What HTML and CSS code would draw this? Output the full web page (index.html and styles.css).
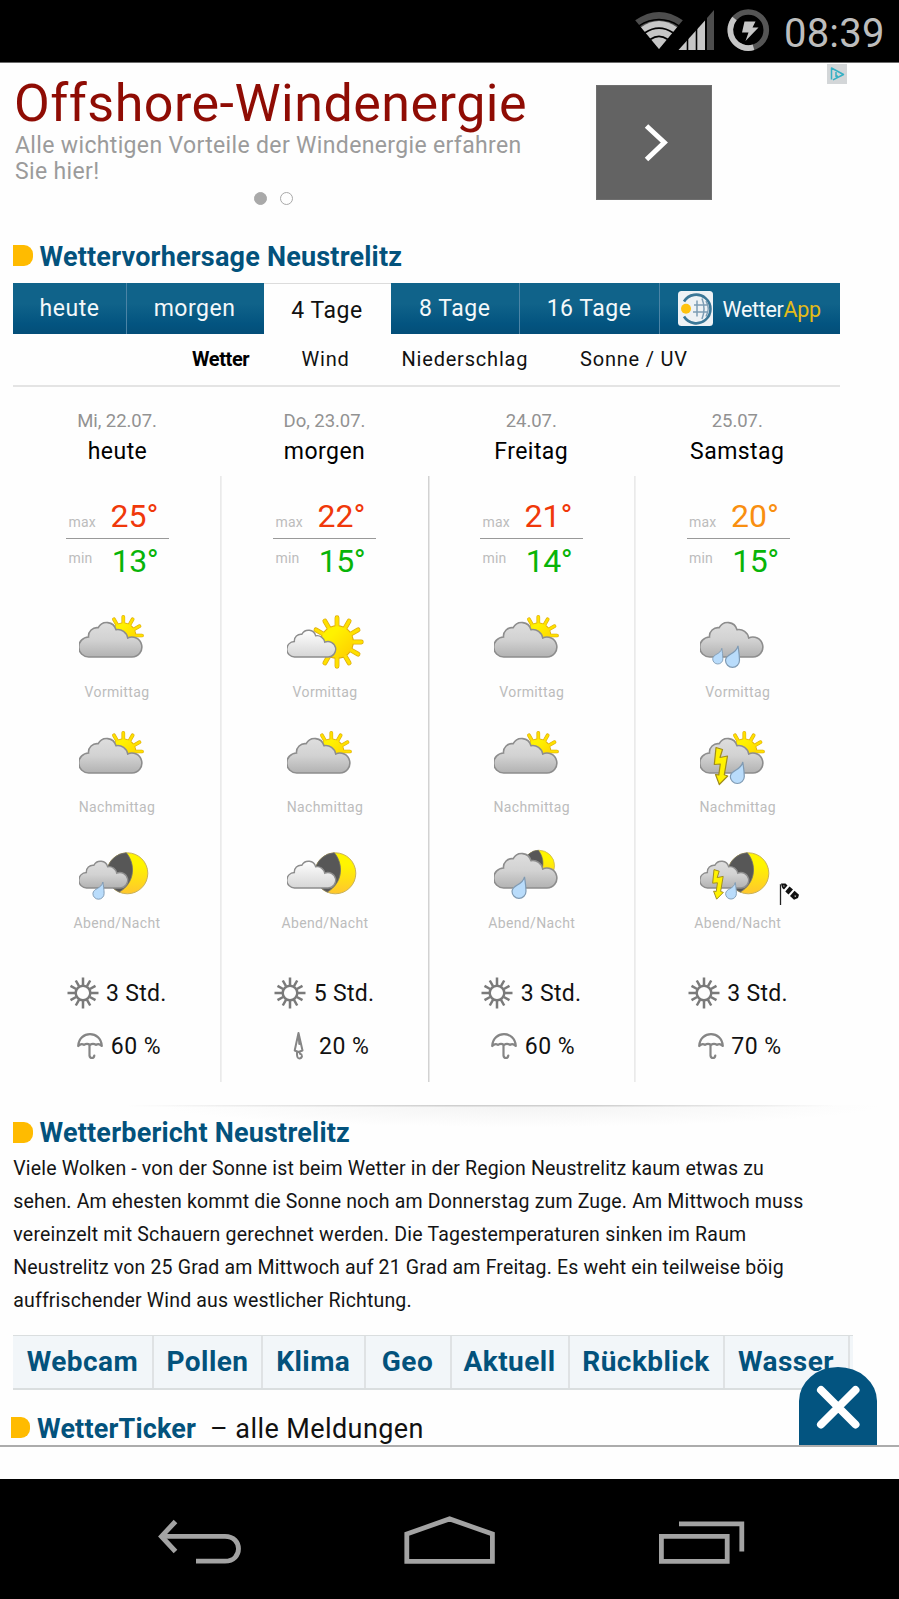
FILE: index.html
```html
<!DOCTYPE html>
<html lang="de">
<head>
<meta charset="utf-8">
<title>Wettervorhersage Neustrelitz</title>
<link rel="stylesheet" href="styles.css">
</head>
<body>
<svg class="defs" width="0" height="0" aria-hidden="true">
  <defs>
    <linearGradient id="gCloud" x1="0" y1="0" x2="0" y2="1"><stop offset="0" stop-color="#dedede"/><stop offset=".5" stop-color="#d2d2d2"/><stop offset="1" stop-color="#b2b2b2"/></linearGradient>
    <linearGradient id="gLight" x1="0" y1="0" x2="0" y2="1"><stop offset="0" stop-color="#ffffff"/><stop offset="1" stop-color="#d6d6d6"/></linearGradient>
    <linearGradient id="gSun" x1="0" y1="0" x2="1" y2="1"><stop offset=".3" stop-color="#fff200"/><stop offset="1" stop-color="#ffcc00"/></linearGradient>
    <linearGradient id="gMoon" x1="0" y1="0" x2="0" y2="1"><stop offset=".3" stop-color="#fff500"/><stop offset="1" stop-color="#ffc62e"/></linearGradient>
    <path id="cloudShape" d="M10 45A10 10 0 0 1 9.500 25A8.600 8.600 0 0 1 19.200 15.700A9.600 9.600 0 0 1 37 17.700A10 10 0 0 1 48.700 25.900A10 10 0 1 1 53 45Z"/>
    <path id="rayLong" d="M-1.400 -14V-24.300a1.400 1.400 0 0 1 2.800 0V-14Z"/>
    <g id="rays">
      <use href="#rayLong"/><use href="#rayLong" transform="rotate(30)"/><use href="#rayLong" transform="rotate(60)"/><use href="#rayLong" transform="rotate(90)"/><use href="#rayLong" transform="rotate(120)"/><use href="#rayLong" transform="rotate(150)"/><use href="#rayLong" transform="rotate(180)"/><use href="#rayLong" transform="rotate(210)"/><use href="#rayLong" transform="rotate(240)"/><use href="#rayLong" transform="rotate(270)"/><use href="#rayLong" transform="rotate(300)"/><use href="#rayLong" transform="rotate(330)"/>
    </g>
    <g id="sun">
      <g fill="#ffd800" stroke="#dba90f" stroke-width="2"><use href="#rays"/><circle r="15.800"/></g>
      <g fill="#ffe100" stroke="#ffe100" stroke-width=".6"><use href="#rays"/></g>
      <circle r="15.800" fill="url(#gSun)"/>
    </g>
    <g id="moon">
      <circle r="20.500" fill="url(#gMoon)" stroke="#c9b25a" stroke-width="1"/>
      <path d="M-1 -20.500C8 -10 8.500 9 -8 18.800A20.500 20.500 0 0 1 -1 -20.500Z" fill="#575757" stroke="#6e6e6e" stroke-width=".8"/>
    </g>
    <path id="drop" d="M5.500 0C6.200 5 7 9 7 14.500A7 7 0 0 1 -7 14.500C-6.500 7.500 3.500 9 5.500 0Z" fill="#b9dcfb" stroke="#7f9ab3" stroke-width="1.200"/>
    <path id="bolt" d="M16 19.500L22.500 21.500L20 29.500L27.500 28L24.300 46.800L27.700 48L19.300 56.500L15.500 46.500L18.800 46.800L20.300 36L14.300 36.500Z" fill="#fff200" stroke="#a08c1c" stroke-width="1.200" stroke-linejoin="round"/>

    <symbol id="w-cloudy-sun" viewBox="0 0 84 70">
      <use href="#sun" transform="translate(44.300 23.500) scale(.77)"/>
      <use href="#cloudShape" fill="url(#gCloud)" stroke="#8d8d8d" stroke-width="1.600"/>
    </symbol>
    <symbol id="w-fair" viewBox="0 0 84 70">
      <use href="#sun" transform="translate(50 30)"/>
      <use href="#cloudShape" transform="translate(0 10.100) scale(.775)" fill="url(#gLight)" stroke="#8d8d8d" stroke-width="1.800"/>
    </symbol>
    <symbol id="w-rain" viewBox="0 0 84 70">
      <use href="#cloudShape" fill="url(#gCloud)" stroke="#8d8d8d" stroke-width="1.600"/>
      <use href="#drop" transform="translate(17.800 36.300) scale(.73)"/>
      <use href="#drop" transform="translate(32.500 33.800)"/>
    </symbol>
    <symbol id="w-storm-sun" viewBox="0 0 84 70">
      <use href="#sun" transform="translate(44.300 23.500) scale(.77)"/>
      <use href="#cloudShape" fill="url(#gCloud)" stroke="#8d8d8d" stroke-width="1.600"/>
      <use href="#bolt"/>
      <use href="#drop" transform="translate(37.300 34)"/>
    </symbol>
    <symbol id="w-night-rain" viewBox="0 0 84 70">
      <use href="#moon" transform="translate(48.300 30.300)"/>
      <use href="#cloudShape" transform="translate(0 10.100) scale(.775)" fill="url(#gCloud)" stroke="#8d8d8d" stroke-width="1.800"/>
      <use href="#drop" transform="translate(19.500 39) scale(.8)"/>
    </symbol>
    <symbol id="w-night" viewBox="0 0 84 70">
      <use href="#moon" transform="translate(48.300 30.300)"/>
      <use href="#cloudShape" transform="translate(0 10.100) scale(.775)" fill="url(#gLight)" stroke="#8d8d8d" stroke-width="1.800"/>
    </symbol>
    <symbol id="w-night-cloud-rain" viewBox="0 0 84 70">
      <use href="#moon" transform="translate(45 22.800) scale(.76)"/>
      <use href="#cloudShape" fill="url(#gCloud)" stroke="#8d8d8d" stroke-width="1.600"/>
      <use href="#drop" transform="translate(25 33.800)"/>
    </symbol>
    <symbol id="w-night-storm" viewBox="0 0 84 70">
      <use href="#moon" transform="translate(48.300 30.300)"/>
      <use href="#cloudShape" transform="translate(0 10.100) scale(.775)" fill="url(#gCloud)" stroke="#8d8d8d" stroke-width="1.800"/>
      <use href="#bolt" transform="translate(1.200 11) scale(.8)"/>
      <use href="#drop" transform="translate(31 39.500) scale(.77)"/>
    </symbol>

    <symbol id="i-sun" viewBox="-16 -16 32 32">
      <g stroke="#7a7a7a" stroke-width="2.500" fill="none">
        <circle r="7.300"/>
        <path d="M0 -8V-15.500M0 8V15.500M-8 0H-15.500M8 0H15.500M4 -6.900L7.200 -12.500M-4 -6.900L-7.200 -12.500M4 6.900L7.200 12.500M-4 6.900L-7.200 12.500M6.900 4L12.500 7.200M-6.900 4L-12.500 7.200M6.900 -4L12.500 -7.200M-6.900 -4L-12.500 -7.200"/>
      </g>
    </symbol>
    <symbol id="i-umbrella" viewBox="0 0 26 28">
      <g stroke="#858585" stroke-width="2.200" fill="none" stroke-linecap="round" stroke-linejoin="round">
        <path d="M1.200 14C2 -1.800 24 -1.800 24.800 14Q22 10.800 19 12.800Q16 10.800 13 12.800Q10 10.800 7 12.800Q4 10.800 1.200 14Z"/>
        <path d="M12.500 13V23.500Q12.800 26 15 26Q17 26 17.300 23.500"/>
      </g>
    </symbol>
    <symbol id="i-umbrella-closed" viewBox="0 0 26 28">
      <g stroke="#858585" stroke-width="2" fill="none" stroke-linecap="round" stroke-linejoin="round">
        <path d="M12.500 1L8.700 18.500L12.500 20L16.500 18.500ZM12.500 1L13.300 12"/>
        <path d="M11 20.500Q10.700 26.500 13.300 26.500Q15.500 26.500 16 24M13.500 20.500Q13.500 22 15.500 22.500"/>
      </g>
    </symbol>
  </defs>
</svg>

<header class="statusbar">
  <svg class="status-icons" width="140" height="62" viewBox="630 0 140 62">
    <path d="M659 49L635.200 20.300Q659 3.500 682.800 20.300Z" fill="#4d4d4d"/>
    <path d="M659 49L641 27.300Q659 14.500 677 27.300Z" fill="#c6c6c6"/>
    <path d="M639 25.200Q659 12.800 679 25.200" transform="translate(0 .6)" fill="none" stroke="#000" stroke-width="1.500"/>
    <path d="M645 32.800Q659 23.500 673 32.800M650.500 39.300Q659 33.500 667.500 39.300" fill="none" stroke="#000" stroke-width="1.800"/>
    <path d="M714 10V50H707V18Z" fill="#4d4d4d"/>
    <path d="M678.500 50L705 20.500V50Z" fill="#c6c6c6"/>
    <path d="M687.500 38V50M696.500 28V50" stroke="#000" stroke-width="1.600"/>
    <circle cx="748.300" cy="30" r="18" fill="none" stroke="#555" stroke-width="5.600"/>
    <path d="M734.500 18.500A18 18 0 0 0 753.500 47.300" fill="none" stroke="#c6c6c6" stroke-width="5.600"/>
    <path d="M744.500 21.500H755.500L752.500 27.500H758.500L745.500 41L748.500 32.500H742Z" fill="#c6c6c6"/>
  </svg>
  <time class="clock">08:39</time>
</header>

<main class="page">
  <section class="ad">
    <div class="ad-copy">
      <div class="ad-title">Offshore-Windenergie</div>
      <div class="ad-text">Alle wichtigen Vorteile der Windenergie erfahren<br>Sie hier!</div>
      <div class="ad-dots"><span class="dot dot-on"></span><span class="dot"></span></div>
    </div>
    <div class="ad-button">
      <svg width="116" height="116" viewBox="0 0 116 116"><path d="M50.500 41L68.300 57.500L50.500 74.500" fill="none" stroke="#fff" stroke-width="5"/></svg>
    </div>
    <svg class="ad-choices" width="20" height="20" viewBox="0 0 20 20"><rect width="20" height="20" fill="#d3d6d8"/><path d="M4.500 15.500V4L16.500 10.500L6 15.800M9 8V12.500L11 12" fill="none" stroke="#35b0c4" stroke-width="1.500" stroke-linejoin="round"/></svg>
  </section>

  <h2 class="heading"><i class="marker"></i><span class="heading-forecast">Wettervorhersage Neustrelitz</span></h2>

  <nav class="tabs">
    <a class="tab tab-heute">heute</a>
    <a class="tab tab-morgen">morgen</a>
    <a class="tab tab-active">4 Tage</a>
    <a class="tab tab-8">8 Tage</a>
    <a class="tab tab-16">16 Tage</a>
    <a class="tab tab-app">
      <svg width="35" height="35" viewBox="0 0 35 35"><rect width="35" height="35" rx="3.500" fill="#eef2f5"/><path d="M6 10.500A14.300 14.300 0 1 1 6 25.500" fill="none" stroke="#3b7797" stroke-width="2.600"/><g fill="none" stroke="#7d9db4" stroke-width="1.500"><path d="M19 9.500V25.500M24 7.500Q28 17.500 24 28M16 14H29.500M15 21H29.500M28 10Q32.500 17 28 25.500"/></g><circle cx="8" cy="17.800" r="5" fill="#ffc20e"/></svg>
      <span class="app-name">Wetter<span class="app-accent">App</span></span>
    </a>
  </nav>

  <nav class="subnav">
    <a class="sub sub-wetter">Wetter</a><a class="sub sub-wind">Wind</a><a class="sub sub-rain">Niederschlag</a><a class="sub">Sonne / UV</a>
  </nav>

  <section class="days">
    <article class="day day-first">
      <div class="date">Mi, 22.07.</div><div class="name">heute</div>
      <div class="column">
        <div class="temps"><div class="max"><span>max</span><b class="hot">25°</b></div><div class="min"><span>min</span><b>13°</b></div></div>
        <div class="slot"><svg><use href="#w-cloudy-sun"/></svg><p>Vormittag</p></div>
        <div class="slot"><svg><use href="#w-cloudy-sun"/></svg><p>Nachmittag</p></div>
        <div class="slot"><svg><use href="#w-night-rain"/></svg><p>Abend/Nacht</p></div>
        <div class="sunhours"><svg><use href="#i-sun"/></svg>3 Std.</div>
        <div class="rain"><svg><use href="#i-umbrella"/></svg><span>60 %</span></div>
      </div>
    </article>
    <article class="day">
      <div class="date">Do, 23.07.</div><div class="name">morgen</div>
      <div class="column line-soft">
        <div class="temps"><div class="max"><span>max</span><b class="hot">22°</b></div><div class="min"><span>min</span><b>15°</b></div></div>
        <div class="slot"><svg><use href="#w-fair"/></svg><p>Vormittag</p></div>
        <div class="slot"><svg><use href="#w-cloudy-sun"/></svg><p>Nachmittag</p></div>
        <div class="slot"><svg><use href="#w-night"/></svg><p>Abend/Nacht</p></div>
        <div class="sunhours"><svg><use href="#i-sun"/></svg>5 Std.</div>
        <div class="rain rain-low"><svg><use href="#i-umbrella-closed"/></svg><span>20 %</span></div>
      </div>
    </article>
    <article class="day">
      <div class="date">24.07.</div><div class="name">Freitag</div>
      <div class="column line-strong">
        <div class="temps"><div class="max"><span>max</span><b class="hot">21°</b></div><div class="min"><span>min</span><b>14°</b></div></div>
        <div class="slot"><svg><use href="#w-cloudy-sun"/></svg><p>Vormittag</p></div>
        <div class="slot"><svg><use href="#w-cloudy-sun"/></svg><p>Nachmittag</p></div>
        <div class="slot"><svg><use href="#w-night-cloud-rain"/></svg><p>Abend/Nacht</p></div>
        <div class="sunhours"><svg><use href="#i-sun"/></svg>3 Std.</div>
        <div class="rain"><svg><use href="#i-umbrella"/></svg><span>60 %</span></div>
      </div>
    </article>
    <article class="day">
      <div class="date">25.07.</div><div class="name">Samstag</div>
      <div class="column line-soft">
        <div class="temps"><div class="max"><span>max</span><b class="warm">20°</b></div><div class="min"><span>min</span><b>15°</b></div></div>
        <div class="slot"><svg><use href="#w-rain"/></svg><p>Vormittag</p></div>
        <div class="slot"><svg><use href="#w-storm-sun"/></svg><p>Nachmittag</p></div>
        <div class="slot"><svg><use href="#w-night-storm"/></svg><svg class="windsock" viewBox="0 0 22 24"><path d="M1.500 1V22" stroke="#222" stroke-width="1.300"/><path d="M1.500 1L7 .8L19.500 11.500L14.500 16.300L3.500 6Z" fill="#fff"/><path d="M2 .5H6.500L8.500 2.500L5 6.500L3.500 5.300L2.500 3Z M10.500 3.500L14 6.600L9.500 11.500L6.300 8.600Z M15.500 7.800L20 11.700L19 15L15 16.800L11 13Z" fill="#111"/><path d="M4 2.600L5.600 2.800L5 4Z M15.500 12.500L17.300 12.800L16 14.300Z" fill="#fff"/></svg><p>Abend/Nacht</p></div>
        <div class="sunhours"><svg><use href="#i-sun"/></svg>3 Std.</div>
        <div class="rain"><svg><use href="#i-umbrella"/></svg><span>70 %</span></div>
      </div>
    </article>
  </section>

  <section class="report">
    <h2 class="heading"><i class="marker"></i><span class="heading-report">Wetterbericht Neustrelitz</span></h2>
    <p class="report-text">Viele Wolken - von der Sonne ist beim Wetter in der Region Neustrelitz kaum etwas zu<br>sehen. Am ehesten kommt die Sonne noch am Donnerstag zum Zuge. Am Mittwoch muss<br><span class="line-wide">vereinzelt mit Schauern gerechnet werden. Die Tagestemperaturen sinken im Raum</span><br>Neustrelitz von 25 Grad am Mittwoch auf 21 Grad am Freitag. Es weht ein teilweise böig<br>auffrischender Wind aus westlicher Richtung.</p>
  </section>

  <nav class="links">
    <a class="link-webcam">Webcam</a><a class="link-pollen">Pollen</a><a class="link-klima">Klima</a><a class="link-geo">Geo</a><a class="link-aktuell">Aktuell</a><a class="link-rueck">Rückblick</a><a class="link-wasser">Wasser</a>
  </nav>

  <h2 class="heading ticker"><i class="marker"></i><span class="heading-ticker">WetterTicker</span><span class="ticker-all">– alle Meldungen</span></h2>

  <button class="close" aria-label="Schließen"><svg width="78" height="79" viewBox="0 0 78 79"><path d="M22 23L56.500 57.500M56.500 23L22 57.500" stroke="#fff" stroke-width="8" stroke-linecap="round"/></svg></button>
</main>

<div class="strip"></div>

<footer class="navbar">
  <svg width="899" height="120" viewBox="0 1479 899 120">
    <g fill="none" stroke="#a3a3a3">
      <path d="M175.500 1521.500L161.500 1536.400L175.500 1551.500" stroke-width="5"/>
      <path d="M162 1536.400H225C243 1536.400 243 1561.200 225 1561.200H196" stroke-width="4.800"/>
      <path d="M406.800 1534L449.600 1518.900L492.400 1534V1561.300H406.800Z" stroke-width="4.800"/>
      <path d="M661.400 1536.400H727.200V1561.300H661.400ZM679 1523.900H741.800V1551.500" stroke-width="4.800"/>
    </g>
  </svg>
</footer>
</body>
</html>
```
FILE: styles.css
```css
* { box-sizing: border-box; margin: 0; padding: 0; }
html, body { width: 899px; height: 1599px; overflow: hidden; }
body { font-family: Roboto, "Liberation Sans", sans-serif; background: #fefefe; color: #111; white-space: nowrap; }
svg { display: block; flex: none; }
.defs { position: absolute; }

.statusbar { height: 63px; background: #000; border-bottom: 1px solid #6b6b6b; display: flex; padding-left: 630px; }
.clock { margin-left: 14px; padding-top: 1px; font-size: 40px; line-height: 66px; letter-spacing: .2px; color: #bdbdbd; }

.page { position: relative; height: 1382px; overflow: hidden; }

.ad { height: 178px; display: flex; padding-left: 15px; }
.ad-copy { width: 581px; padding-top: 13px; }
.ad-title { font-size: 52px; line-height: 56px; letter-spacing: .48px; color: #8f0c04; margin-left: -1px; }
.ad-text { padding-top: 1px; font-size: 23px; line-height: 25.700px; letter-spacing: .346px; color: #9b9b9b; }
.ad-dots { display: flex; gap: 13.400px; margin: 7.500px 0 0 238.500px; }
.dot { width: 13px; height: 13px; border: 1.500px solid #a9a9a9; border-radius: 50%; }
.dot-on { background: #a9a9a9; }
.ad-button { width: 115.500px; height: 115px; margin: 22px .5px 0 0; background: #636363; border: 1px solid #6f6f6f; }
.ad-button svg { margin: -1px; }
.ad-choices { margin: 1px 0 0 115px; }

.heading { display: flex; align-items: center; height: 30px; margin-left: 13px; font-size: 27px; line-height: 30px; font-weight: 700; color: #03527c; }
.marker { width: 19.500px; height: 21px; margin: 0 7px 1px 0; background: #ffbb00; border-radius: 0 9px 9px 0; }
.heading-forecast { letter-spacing: .2px; padding-top: 1px; }
.heading-report { letter-spacing: .2px; }

.tabs { display: flex; width: 827px; height: 51px; margin: 12px 0 0 13px; }
.tab { color: #f4f8fa; background: linear-gradient(#10638a, #10638a 40%, #035480 80%, #034e78); text-align: center; font-size: 23px; line-height: 52px; letter-spacing: .5px; border-right: 1px solid #4b84a6; }
.tab-heute { width: 114px; padding-right: 0; }
.tab-morgen { width: 137px; padding-right: 2px; border-right: 0; }
.tab-active { width: 127px; padding-right: 1px; background: #fefefe; color: #111; border: 0; border-top: 1px solid #dcdcdc; padding-top: 1px; }
.tab-8 { width: 128.500px; }
.tab-16 { width: 140px; }
.tab-app { display: flex; align-items: center; gap: 9.500px; width: 180.500px; padding-left: 18.500px; border: 0; }
.app-name { font-size: 21.500px; line-height: 50px; letter-spacing: -.3px; padding-top: 3px; }
.app-accent { color: #e3bb17; }

.subnav { display: flex; width: 827px; height: 53px; margin-left: 13px; padding-left: 179px; border-bottom: 2px solid #e4e4e4; font-size: 20px; line-height: 50px; letter-spacing: .8px; }
.sub-wetter { width: 109.500px; font-weight: 700; letter-spacing: -.4px; color: #000; }
.sub-wind { width: 100px; }
.sub-rain { width: 178.500px; }

.days { display: grid; grid-template-columns: 207px 207px 206.500px 205.500px; margin-left: 14px; padding-top: 21px; }
.date { text-align: center; font-size: 18.500px; line-height: 26px; letter-spacing: -.05px; color: #929292; }
.day-first .date { padding-right: 1px; }
.name { text-align: center; font-size: 23px; line-height: 35px; letter-spacing: .45px; color: #000; }
.column { height: 606px; margin-top: 7px; padding-top: 18px; }
.line-soft { box-shadow: -1px 0 #eaeaea, inset 1px 0 #f0f0f0; }
.line-strong { box-shadow: inset 1.500px 0 #d2d2d2; }
.temps { width: 103px; margin-left: 52px; }
.max, .min { display: flex; justify-content: space-between; padding: 0 10.600px 0 2.500px; }
.max { align-items: baseline; height: 45px; border-bottom: 1px solid #999; }
.temps span { font-size: 14px; letter-spacing: .2px; color: #bcbcbc; }
.temps b { font-weight: 400; font-size: 32px; line-height: 44px; }
.min { height: 43px; }
.min span { line-height: 39px; }
.min b { line-height: 45px; color: #08b408; letter-spacing: -.4px; }
.temps .hot { color: #f0380a; }
.temps .warm { color: #f98f10; }
.slot { position: relative; height: 91.500px; margin-top: 24px; }
.temps + .slot { margin-top: 30px; }
.slot svg { width: 84px; height: 70px; margin: 0 0 -1.500px 65.500px; }
.day-first .slot svg { margin-left: 64.500px; }
.slot p { font-size: 14px; line-height: 22px; letter-spacing: .35px; color: #bcbcbc; text-align: center; padding-left: 1px; }
.day-first .slot p { padding: 0 1px 0 0; }
.slot .windsock { position: absolute; left: 144.500px; top: 40px; width: 22px; height: 24px; margin: 0; }
.sunhours, .rain { display: flex; align-items: center; gap: 7.500px; height: 31px; font-size: 23px; line-height: 31px; color: #111; }
.sunhours { margin-top: 43px; padding-left: 53.300px; letter-spacing: .3px; }
.day-first .sunhours { padding-left: 52.500px; }
.sunhours svg { width: 32px; height: 32px; }
.rain { margin-top: 21.500px; padding-left: 63.300px; letter-spacing: .48px; }
.rain span { padding-top: 2px; }
.rain-low { padding-left: 64.500px; }
.rain svg { width: 26px; height: 28px; }

.report {
  margin-top: 23px; padding-top: 12.500px;
  background:
    linear-gradient(90deg, transparent 14%, #cfcfcf 50%, #cfcfcf 66%, transparent 93%) 0 0 / 899px 1.500px no-repeat,
    radial-gradient(ellipse 360px 22px at 520px 0, #f3f3f3, transparent) 0 0 no-repeat;
}
.report-text { margin: 4px 0 0 13.300px; font-size: 19.500px; line-height: 33px; letter-spacing: .16px; color: #141414; }
.line-wide { letter-spacing: .21px; }

.links { display: flex; width: 840px; height: 54.500px; margin: 18.500px 0 0 13px; background: #f2f6f9; border-top: 1px solid #dadedf; border-bottom: 2px solid #dadedf; }
.links a { border-right: 2px solid #dfe2e4; text-align: center; font-size: 28px; line-height: 52px; font-weight: 700; letter-spacing: .45px; color: #03527c; }
.link-webcam { width: 141px; }
.link-pollen { width: 109px; }
.link-klima { width: 102.500px; }
.link-geo { width: 86px; }
.link-aktuell { width: 118px; }
.link-rueck { width: 155px; }
.link-wasser { width: 125px; }

.ticker { margin: 23.500px 0 0 10.500px; }
.heading-ticker { letter-spacing: .162px; padding-top: 1px; }
.ticker-all { font-weight: 400; letter-spacing: .42px; color: #111; margin-left: 14px; padding-top: 1px; }

.close { position: absolute; left: 798.500px; top: 1303.500px; width: 78px; height: 79px; border: 0; background: #035480; border-radius: 39px 39px 0 0 / 34px 34px 0 0; }

.strip { height: 34px; border-top: 2px solid #acacac; background: #fefefe; }
.navbar { height: 120px; background: #000; }
```
